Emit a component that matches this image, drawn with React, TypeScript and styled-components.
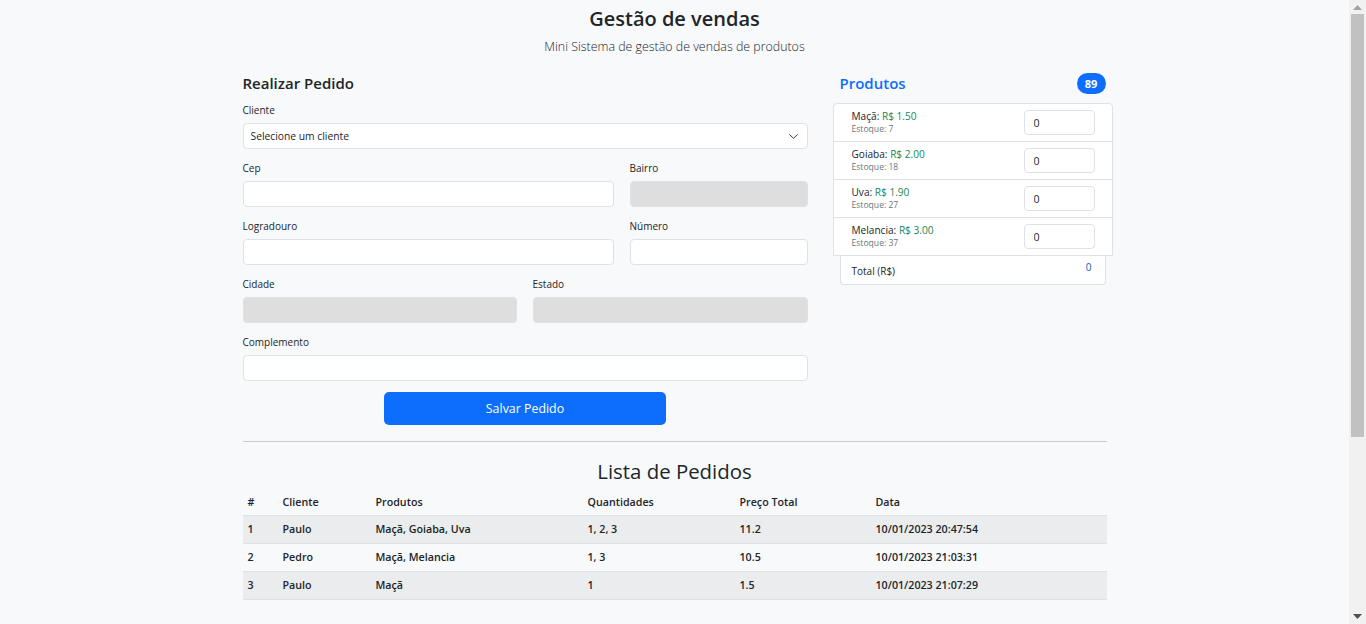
import React from "react";
import styled, { createGlobalStyle } from "styled-components";

const GlobalStyle = createGlobalStyle`
  html, body {
    margin: 0;
    padding: 0;
    background: #f8f9fa;
    color: #212529;
    font-family: "Open Sans", "Noto Sans", sans-serif;
  }
  * { box-sizing: border-box; }
`;

const Page = styled.div`
  min-height: 870px;
  margin-right: 17px;
`;

const ScrollTrack = styled.div`
  position: fixed;
  top: 0;
  right: 0;
  width: 17px;
  height: 100vh;
  background: #f1f1f1;
`;

const ScrollThumb = styled.div`
  position: absolute;
  left: 2px;
  right: 2px;
  top: 14px;
  height: 423px;
  background: #c1c1c1;
`;

const ScrollArrow = styled.svg<{ $bottom?: boolean }>`
  position: absolute;
  left: 4px;
  ${(p) => (p.$bottom ? "bottom: 5px;" : "top: 5px;")}
`;

const Container = styled.div`
  width: 864px;
  margin: 0 auto;
`;

const Header = styled.header`
  text-align: center;
  padding-top: 4px;
`;

const Title = styled.h1`
  margin: 0;
  font-size: 20px;
  line-height: 30px;
  font-weight: 600;
`;

const Subtitle = styled.p`
  margin: 4px 0 0;
  font-size: 12.4px;
  line-height: 18px;
  font-weight: 300;
`;

const MainGrid = styled.div`
  display: grid;
  grid-template-columns: 565px 266px;
  column-gap: 32px;
  margin-top: 16px;
`;

const Column = styled.section`
  display: flex;
  flex-direction: column;
`;

const SectionTitle = styled.h2<{ $primary?: boolean }>`
  margin: 0;
  font-size: 15px;
  line-height: 22px;
  font-weight: 600;
  color: ${(p) => (p.$primary ? "#0d6efd" : "#212529")};
`;

const Form = styled.form`
  display: flex;
  flex-direction: column;
  gap: 11px;
  margin-top: 8px;
`;

const FieldRow = styled.div<{ $cols: string }>`
  display: grid;
  grid-template-columns: ${(p) => p.$cols};
  column-gap: 16px;
`;

const Field = styled.div`
  display: flex;
  flex-direction: column;
  gap: 5px;
`;

const Label = styled.label`
  font-size: 10px;
  line-height: 16px;
`;

const Input = styled.input`
  height: 26px;
  width: 100%;
  border: 1px solid #dee2e6;
  border-radius: 4px;
  background: ${(p) => (p.disabled ? "#dedede" : "#fff")};
  font-family: inherit;
  font-size: 10.6px;
  padding: 0 8px;
  color: #212529;
  outline: none;
`;

const SelectWrap = styled.div`
  position: relative;
`;

const Select = styled.select`
  appearance: none;
  height: 26px;
  width: 100%;
  border: 1px solid #dee2e6;
  border-radius: 4px;
  background: #fff;
  font-family: inherit;
  font-size: 10.3px;
  padding: 0 7px;
  color: #212529;
  outline: none;
`;

const Chevron = styled.svg`
  position: absolute;
  right: 10px;
  top: 11px;
  pointer-events: none;
`;

const SubmitButton = styled.button`
  align-self: center;
  width: 282px;
  height: 33px;
  border: none;
  border-radius: 5px;
  background: #0d6efd;
  color: #fff;
  font-family: inherit;
  font-size: 12.4px;
`;

const ProductsHeader = styled.div`
  display: flex;
  align-items: center;
  justify-content: space-between;
  height: 22px;
`;

const Badge = styled.span`
  display: inline-flex;
  align-items: center;
  justify-content: center;
  width: 29px;
  height: 21px;
  border-radius: 11px;
  background: #0d6efd;
  color: #fff;
  font-size: 11px;
  font-weight: 700;
`;

const ProductList = styled.ul`
  list-style: none;
  margin: 9px -7px 0;
  padding: 0;
  border: 1px solid #dee2e6;
  border-radius: 4px 4px 0 0;
  background: #fff;
`;

const ProductItem = styled.li`
  box-sizing: content-box;
  display: flex;
  align-items: center;
  justify-content: space-between;
  height: 37px;
  padding: 0 17px 0 18px;
  & + & {
    border-top: 1px solid #dee2e6;
  }
`;

const ProductInfo = styled.div`
  display: flex;
  flex-direction: column;
`;

const ProductName = styled.div`
  font-size: 10.1px;
  line-height: 14px;
  font-weight: 500;
`;

const Price = styled.span`
  color: #198754;
  font-weight: 400;
`;

const Stock = styled.div`
  font-size: 8.6px;
  line-height: 13px;
  color: #6c757d;
`;

const QtyInput = styled.input`
  width: 71px;
  height: 25px;
  border: 1px solid #dee2e6;
  border-radius: 4px;
  background: #fff;
  font-family: inherit;
  font-size: 10.6px;
  padding: 0 9px;
  color: #212529;
  outline: none;
`;

const TotalBox = styled.div`
  display: flex;
  justify-content: space-between;
  height: 29px;
  padding: 6px 13px 0 11px;
  border: 1px solid #dee2e6;
  border-top: none;
  border-radius: 0 0 4px 4px;
  background: #fff;
  font-size: 10px;
  line-height: 16px;
`;

const TotalLabel = styled.span`
  padding-top: 1px;
`;

const TotalValue = styled.span`
  color: #0a58ca;
  margin-top: -3px;
`;

const Divider = styled.hr`
  margin: 16px 0 0;
  border: none;
  border-top: 1px solid #c9cacb;
`;

const ListTitle = styled.h2`
  margin: 14px 0 0;
  text-align: center;
  font-size: 20.4px;
  line-height: 30px;
  font-weight: 500;
`;

const Table = styled.table`
  width: 100%;
  border-collapse: collapse;
  table-layout: fixed;
  margin-top: 4px;
  font-size: 10.7px;
  font-weight: 600;
`;

const Th = styled.th<{ $w?: number }>`
  text-align: left;
  height: 25px;
  padding: 0 5px;
  font-weight: 600;
  width: ${(p) => (p.$w ? `${p.$w}px` : "auto")};
  border-bottom: 1px solid #dee2e6;
`;

const Tr = styled.tr<{ $striped?: boolean }>`
  background: ${(p) => (p.$striped ? "#ebeced" : "transparent")};
`;

const Td = styled.td`
  height: 28px;
  padding: 0 5px;
  border-bottom: 1px solid #dee2e6;
`;

const products = [
  { name: "Maçã", price: "R$ 1.50", stock: 7 },
  { name: "Goiaba", price: "R$ 2.00", stock: 18 },
  { name: "Uva", price: "R$ 1.90", stock: 27 },
  { name: "Melancia", price: "R$ 3.00", stock: 37 },
];

const orders = [
  { id: 1, client: "Paulo", products: "Maçã, Goiaba, Uva", qty: "1, 2, 3", total: "11.2", date: "10/01/2023 20:47:54" },
  { id: 2, client: "Pedro", products: "Maçã, Melancia", qty: "1, 3", total: "10.5", date: "10/01/2023 21:03:31" },
  { id: 3, client: "Paulo", products: "Maçã", qty: "1", total: "1.5", date: "10/01/2023 21:07:29" },
];

export default function App() {
  return (
    <Page>
      <GlobalStyle />
      <Container>
        <Header>
          <Title>Gestão de vendas</Title>
          <Subtitle>Mini Sistema de gestão de vendas de produtos</Subtitle>
        </Header>
        <MainGrid>
          <Column>
            <SectionTitle>Realizar Pedido</SectionTitle>
            <Form onSubmit={(e) => e.preventDefault()}>
              <Field>
                <Label>Cliente</Label>
                <SelectWrap>
                  <Select defaultValue="">
                    <option value="">Selecione um cliente</option>
                    <option>Paulo</option>
                    <option>Pedro</option>
                  </Select>
                  <Chevron width="9" height="5" viewBox="0 0 9 5">
                    <path d="M0.7 0.7l3.8 3.6 3.8-3.6" fill="none" stroke="#343a40" strokeWidth="1" strokeLinecap="round" strokeLinejoin="round" />
                  </Chevron>
                </SelectWrap>
              </Field>
              <FieldRow $cols="371px 178px">
                <Field>
                  <Label>Cep</Label>
                  <Input />
                </Field>
                <Field>
                  <Label>Bairro</Label>
                  <Input disabled />
                </Field>
              </FieldRow>
              <FieldRow $cols="371px 178px">
                <Field>
                  <Label>Logradouro</Label>
                  <Input />
                </Field>
                <Field>
                  <Label>Número</Label>
                  <Input />
                </Field>
              </FieldRow>
              <FieldRow $cols="274px 275px">
                <Field>
                  <Label>Cidade</Label>
                  <Input disabled />
                </Field>
                <Field>
                  <Label>Estado</Label>
                  <Input disabled />
                </Field>
              </FieldRow>
              <Field>
                <Label>Complemento</Label>
                <Input />
              </Field>
              <SubmitButton type="submit">Salvar Pedido</SubmitButton>
            </Form>
          </Column>
          <Column>
            <ProductsHeader>
              <SectionTitle $primary>Produtos</SectionTitle>
              <Badge>89</Badge>
            </ProductsHeader>
            <ProductList>
              {products.map((p) => (
                <ProductItem key={p.name}>
                  <ProductInfo>
                    <ProductName>
                      {p.name}: <Price>{p.price}</Price>
                    </ProductName>
                    <Stock>Estoque: {p.stock}</Stock>
                  </ProductInfo>
                  <QtyInput defaultValue="0" />
                </ProductItem>
              ))}
            </ProductList>
            <TotalBox>
              <TotalLabel>Total (R$)</TotalLabel>
              <TotalValue>0</TotalValue>
            </TotalBox>
          </Column>
        </MainGrid>
        <Divider />
        <ListTitle>Lista de Pedidos</ListTitle>
        <Table>
          <thead>
            <tr>
              <Th $w={35}>#</Th>
              <Th $w={93}>Cliente</Th>
              <Th $w={212}>Produtos</Th>
              <Th $w={152}>Quantidades</Th>
              <Th $w={136}>Preço Total</Th>
              <Th>Data</Th>
            </tr>
          </thead>
          <tbody>
            {orders.map((o, i) => (
              <Tr key={o.id} $striped={i % 2 === 0}>
                <Td>{o.id}</Td>
                <Td>{o.client}</Td>
                <Td>{o.products}</Td>
                <Td>{o.qty}</Td>
                <Td>{o.total}</Td>
                <Td>{o.date}</Td>
              </Tr>
            ))}
          </tbody>
        </Table>
      </Container>
      <ScrollTrack aria-hidden>
        <ScrollArrow width="9" height="5" viewBox="0 0 9 5">
          <path d="M0 5L4.5 0 9 5z" fill="#a3a3a3" />
        </ScrollArrow>
        <ScrollThumb />
        <ScrollArrow $bottom width="9" height="5" viewBox="0 0 9 5">
          <path d="M0 0L4.5 5 9 0z" fill="#505050" />
        </ScrollArrow>
      </ScrollTrack>
    </Page>
  );
}
